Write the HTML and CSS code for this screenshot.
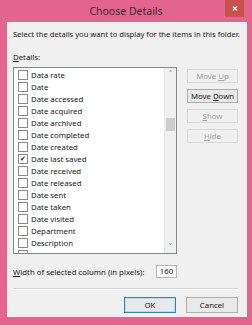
FILE: index.html
```html
<!DOCTYPE html>
<html lang="en">
<head>
    <meta charset="UTF-8">
    <title>Choose Details</title>
    <link rel="stylesheet" href="styles.css">
</head>
<body>
    <div class="window">
        <div class="titlebar">
            <span class="title">Choose Details</span>
            <div class="close">&#x2715;</div>
        </div>
        <div class="client">
            <p class="intro">Select the details you want to display for the items in this folder.</p>
            <p class="label"><span class="u">D</span>etails:</p>
            <div class="main">
                <div class="listbox">
                    <div class="rows">
                        <div class="row"><span class="box"></span>Data rate</div>
                        <div class="row"><span class="box"></span>Date</div>
                        <div class="row"><span class="box"></span>Date accessed</div>
                        <div class="row"><span class="box"></span>Date acquired</div>
                        <div class="row"><span class="box"></span>Date archived</div>
                        <div class="row"><span class="box"></span>Date completed</div>
                        <div class="row"><span class="box"></span>Date created</div>
                        <div class="row"><span class="box checked">&#x2714;</span>Date last saved</div>
                        <div class="row"><span class="box"></span>Date received</div>
                        <div class="row"><span class="box"></span>Date released</div>
                        <div class="row"><span class="box"></span>Date sent</div>
                        <div class="row"><span class="box"></span>Date taken</div>
                        <div class="row"><span class="box"></span>Date visited</div>
                        <div class="row"><span class="box"></span>Department</div>
                        <div class="row"><span class="box"></span>Description</div>
                        <div class="row"><span class="box"></span></div>
                    </div>
                    <div class="scrollbar">
                        <span class="arrow">&#x2C4;</span>
                        <div class="track"><div class="thumb"></div></div>
                        <span class="arrow">&#x2C5;</span>
                    </div>
                </div>
                <div class="side">
                    <button class="btn" disabled>Move <span class="u">U</span>p</button>
                    <button class="btn">Move <span class="u">D</span>own</button>
                    <button class="btn" disabled><span class="u">S</span>how</button>
                    <button class="btn" disabled><span class="u">H</span>ide</button>
                </div>
            </div>
            <div class="width-row">
                <span><span class="u">W</span>idth of selected column (in pixels):</span>
                <span class="field">160</span>
            </div>
            <div class="separator"></div>
            <div class="actions">
                <button class="btn big default">OK</button>
                <button class="btn big">Cancel</button>
            </div>
        </div>
    </div>
</body>
</html>
```

FILE: styles.css
```css
body {
    margin: 0;
    font-family: 'Noto Sans', 'Open Sans', sans-serif;
    font-size: 7.8px;
    color: #1a1a1a;
}
.window {
    width: 252px;
    height: 325px;
    box-sizing: border-box;
    background-color: #e3658f;
    padding: 0 5px 8px 7px;
    display: flex;
    flex-direction: column;
}
.titlebar {
    height: 22px;
    position: relative;
    display: flex;
    align-items: center;
    justify-content: center;
}
.title {
    font-size: 10.5px;
    color: #3c2a30;
    margin-left: -2px;
}
.close {
    position: absolute;
    top: 0;
    right: 3px;
    width: 19px;
    height: 17px;
    background-color: #c9524f;
    color: #ffffff;
    font-size: 7px;
    font-weight: bold;
    display: flex;
    align-items: center;
    justify-content: center;
}
.client {
    flex: 1;
    background-color: #f0f0f0;
    padding: 6px 9px 0 6px;
    display: flex;
    flex-direction: column;
}
.intro, .label {
    margin: 0;
    line-height: 12px;
}
.intro {
    font-size: 7.6px;
    white-space: nowrap;
}
.label {
    margin-top: 11px;
}
.u {
    text-decoration: underline;
}
.main {
    display: flex;
    gap: 10px;
    margin-top: 4px;
}
.listbox {
    width: 164px;
    height: 187px;
    box-sizing: border-box;
    border: 1px solid #828790;
    background: #ffffff;
    display: flex;
    overflow: hidden;
}
.rows {
    flex: 1;
    padding-top: 1px;
}
.row {
    height: 12px;
    display: flex;
    align-items: center;
    white-space: nowrap;
}
.box {
    width: 8px;
    height: 8px;
    border: 1px solid #8a8a8a;
    background: #ffffff;
    margin: 0 3px 0 4px;
    font-size: 7px;
    line-height: 8px;
    text-align: center;
    color: #222222;
}
.scrollbar {
    width: 11px;
    background: #f0f0f0;
    border-left: 1px solid #e8e8e8;
    display: flex;
    flex-direction: column;
    align-items: center;
}
.arrow {
    height: 12px;
    line-height: 12px;
    font-size: 9px;
    color: #606060;
}
.track {
    flex: 1;
    width: 100%;
    padding-top: 38px;
}
.thumb {
    height: 13px;
    background: #cdcdcd;
    margin: 0 1px;
}
.side {
    width: 51px;
    padding-top: 2px;
    display: flex;
    flex-direction: column;
    gap: 6px;
}
.btn {
    font-family: inherit;
    font-size: 7.8px;
    height: 14px;
    padding: 0;
    margin: 0;
    border: 1px solid #acacac;
    background: #e9e9e9;
    color: #1a1a1a;
}
.btn:disabled {
    border-color: #d9d9d9;
    background: #f0f0f0;
    color: #a3a3a3;
}
.width-row {
    margin-top: 11px;
    display: flex;
    align-items: center;
    justify-content: space-between;
    padding-right: 61px;
}
.field {
    width: 19px;
    height: 11px;
    border: 1px solid #b5b5b5;
    background: #ffffff;
    line-height: 11px;
    text-align: center;
}
.separator {
    margin: 10px 0 0 0;
    border-top: 1px solid #d5d5d5;
    border-bottom: 1px solid #ffffff;
}
.actions {
    margin-top: 7px;
    display: flex;
    justify-content: flex-end;
    gap: 10px;
}
.btn.big {
    width: 52px;
    height: 16px;
}
.btn.default {
    border-color: #3c7fb1;
    box-shadow: inset 0 0 0 1px #bcdcf4;
}
```
